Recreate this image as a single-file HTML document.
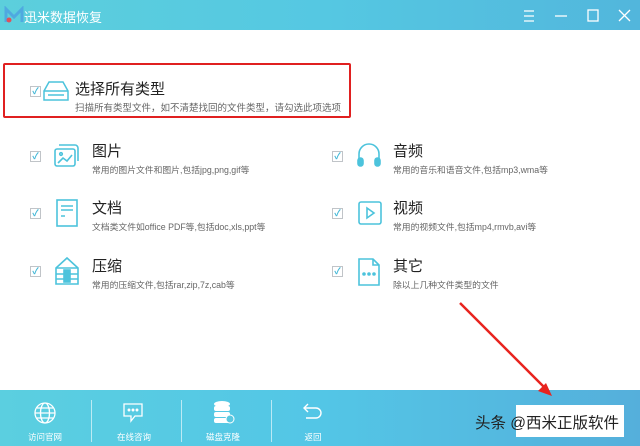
<!DOCTYPE html>
<html><head><meta charset="utf-8"><style>
*{margin:0;padding:0;box-sizing:border-box}
body{width:640px;height:446px;overflow:hidden;background:#fff;font-family:"Liberation Sans","Noto Sans CJK SC",sans-serif;position:relative}
.top{position:absolute;left:0;top:0;width:640px;height:30px;background:linear-gradient(90deg,#5ccfdc,#55c8e2 50%,#52b6dc)}
.foot{position:absolute;left:0;top:390px;width:640px;height:56px;background:linear-gradient(90deg,#5bcfe0,#53c6e6 50%,#55afdb)}
.abs{position:absolute}
.cb{position:absolute;width:11px;height:11px;border:1px solid #c0c4c8;background:#fff;color:#3fb6d6;font-size:9px;line-height:9px;text-align:center;font-weight:bold}
.t{position:absolute;font-size:15px;color:#222}
.d{position:absolute;font-size:8.8px;color:#666;white-space:nowrap}
.fl{position:absolute;top:431px;font-size:8.5px;color:#fff;width:60px;text-align:center}
.dv{position:absolute;top:400px;width:1px;height:42px;background:rgba(255,255,255,.6)}
</style></head><body>
<div class="top"></div>
<svg class="abs" style="left:4px;top:6px" width="20" height="18" viewBox="0 0 20 18"><path d="M2 16V3l8 8 8-8v13" fill="none" stroke="#4fa9e0" stroke-width="3"/><circle cx="5" cy="14" r="2.5" fill="#e0505a"/></svg>
<div class="abs" style="left:24px;top:7px;font-size:13px;color:#fff">迅米数据恢复</div>
<svg class="abs" style="left:520px;top:8px" width="115" height="16" viewBox="0 0 115 16" fill="none" stroke="#fff" stroke-width="1.3"><path d="M4 3h10M4 8h10M4 13h10"/><path d="M35 8h12"/><rect x="68" y="2" width="10" height="11"/><path d="M99 2l11 11M110 2l-11 11"/></svg>

<div class="abs" style="left:3px;top:63px;width:348px;height:55px;border:2px solid #e02020;border-radius:2px"></div>
<div class="cb" style="left:30px;top:86px">✓</div>
<svg class="abs" style="left:42px;top:80px" width="28" height="22" viewBox="0 0 28 22" fill="none" stroke="#4cc3dc" stroke-width="1.5"><path d="M7 2h14l5 9v9H2v-9z"/><path d="M2 11h24M6 15h16"/></svg>
<div class="t" style="left:75px;top:78px">选择所有类型</div>
<div class="d" style="left:75px;top:100px;font-size:9.5px">扫描所有类型文件，如不清楚找回的文件类型，请勾选此项选项</div>

<div class="cb" style="left:30px;top:151px">✓</div>
<svg class="abs" style="left:53px;top:142px" width="28" height="26" viewBox="0 0 28 26" fill="none" stroke="#4cc3dc" stroke-width="1.6"><rect x="2" y="7" width="20" height="17" rx="2"/><path d="M6 3h16a3 3 0 0 1 3 3v13"/><circle cx="8" cy="12" r="1.3"/><path d="M5 21l5-5 4 3 5-6"/></svg>
<div class="t" style="left:92px;top:140px">图片</div>
<div class="d" style="left:92px;top:163px">常用的图片文件和图片,包括jpg,png,gif等</div>

<div class="cb" style="left:332px;top:151px">✓</div>
<svg class="abs" style="left:356px;top:142px" width="26" height="26" viewBox="0 0 26 26" fill="none" stroke="#4cc3dc" stroke-width="1.6"><path d="M3 18v-6a10 10 0 0 1 20 0v6"/><rect x="2" y="16" width="5" height="8" rx="2.5" fill="#4cc3dc"/><rect x="19" y="16" width="5" height="8" rx="2.5" fill="#4cc3dc"/></svg>
<div class="t" style="left:393px;top:140px">音频</div>
<div class="d" style="left:393px;top:163px">常用的音乐和语音文件,包括mp3,wma等</div>

<div class="cb" style="left:30px;top:208px">✓</div>
<svg class="abs" style="left:55px;top:198px" width="24" height="30" viewBox="0 0 24 30" fill="none" stroke="#4cc3dc" stroke-width="1.6"><rect x="2" y="2" width="20" height="26"/><path d="M6 8h12M6 12h12M6 18h4"/></svg>
<div class="t" style="left:92px;top:197px">文档</div>
<div class="d" style="left:92px;top:220px">文档类文件如office PDF等,包括doc,xls,ppt等</div>

<div class="cb" style="left:332px;top:208px">✓</div>
<svg class="abs" style="left:357px;top:200px" width="26" height="26" viewBox="0 0 26 26" fill="none" stroke="#4cc3dc" stroke-width="1.6"><rect x="2" y="2" width="22" height="22" rx="2"/><path d="M10 8l7 5-7 5z"/></svg>
<div class="t" style="left:393px;top:197px">视频</div>
<div class="d" style="left:393px;top:220px">常用的视频文件,包括mp4,rmvb,avi等</div>

<div class="cb" style="left:30px;top:266px">✓</div>
<svg class="abs" style="left:54px;top:256px" width="26" height="30" viewBox="0 0 26 30" fill="none" stroke="#4cc3dc" stroke-width="1.6"><path d="M2 12l11-10 11 10v16H2z"/><path d="M2 12h22M2 18h22M2 23h22"/><rect x="10" y="14" width="6" height="12" fill="#4cc3dc"/></svg>
<div class="t" style="left:92px;top:255px">压缩</div>
<div class="d" style="left:92px;top:278px">常用的压缩文件,包括rar,zip,7z,cab等</div>

<div class="cb" style="left:332px;top:266px">✓</div>
<svg class="abs" style="left:357px;top:257px" width="24" height="30" viewBox="0 0 24 30" fill="none" stroke="#4cc3dc" stroke-width="1.6"><path d="M2 2h14l6 6v20H2z"/><path d="M16 2v6h6"/><circle cx="7" cy="17" r="1" fill="#4cc3dc"/><circle cx="12" cy="17" r="1" fill="#4cc3dc"/><circle cx="17" cy="17" r="1" fill="#4cc3dc"/></svg>
<div class="t" style="left:393px;top:255px">其它</div>
<div class="d" style="left:393px;top:278px">除以上几种文件类型的文件</div>

<div class="foot"></div>
<svg class="abs" style="left:33px;top:401px" width="24" height="24" viewBox="0 0 24 24" fill="none" stroke="#fff" stroke-width="1.3"><circle cx="12" cy="12" r="10"/><ellipse cx="12" cy="12" rx="4.5" ry="10"/><path d="M2 12h20M4 7h16M4 17h16"/></svg>
<svg class="abs" style="left:122px;top:401px" width="24" height="24" viewBox="0 0 24 24" fill="none" stroke="#fff" stroke-width="1.3"><path d="M2 3h18v12H13l-4 5v-5H2z"/><circle cx="7" cy="9" r=".8" fill="#fff"/><circle cx="11" cy="9" r=".8" fill="#fff"/><circle cx="15" cy="9" r=".8" fill="#fff"/></svg>
<svg class="abs" style="left:212px;top:400px" width="24" height="26" viewBox="0 0 24 26" fill="#fff"><ellipse cx="10" cy="4" rx="8" ry="3"/><rect x="2" y="6" width="16" height="5" rx="2"/><rect x="2" y="12" width="16" height="5" rx="2"/><rect x="2" y="18" width="16" height="5" rx="2"/><circle cx="18" cy="19" r="4" fill="#5ac8e0" stroke="#fff"/></svg>
<svg class="abs" style="left:302px;top:402px" width="22" height="20" viewBox="0 0 22 20" fill="none" stroke="#fff" stroke-width="1.4"><path d="M6 2L2 6l4 4"/><path d="M2 6h12a5 5 0 0 1 0 10H4"/></svg>
<div class="fl" style="left:15px">访问官网</div>
<div class="fl" style="left:104px">在线咨询</div>
<div class="fl" style="left:193px">磁盘克隆</div>
<div class="fl" style="left:283px">返回</div>
<div class="dv" style="left:91px"></div>
<div class="dv" style="left:181px"></div>
<div class="dv" style="left:271px"></div>

<div class="abs" style="left:516px;top:405px;width:108px;height:32px;background:#fff"></div>
<div class="abs" style="left:475px;top:411px;font-size:15.5px;color:#222;white-space:nowrap">头条 @西米正版软件</div>

<svg class="abs" style="left:0;top:0" width="640" height="446"><path d="M460 303L545 388" stroke="#e8231e" stroke-width="2.5"/><path d="M552 396l-14-5 8-8z" fill="#e8231e"/></svg>
</body></html>
